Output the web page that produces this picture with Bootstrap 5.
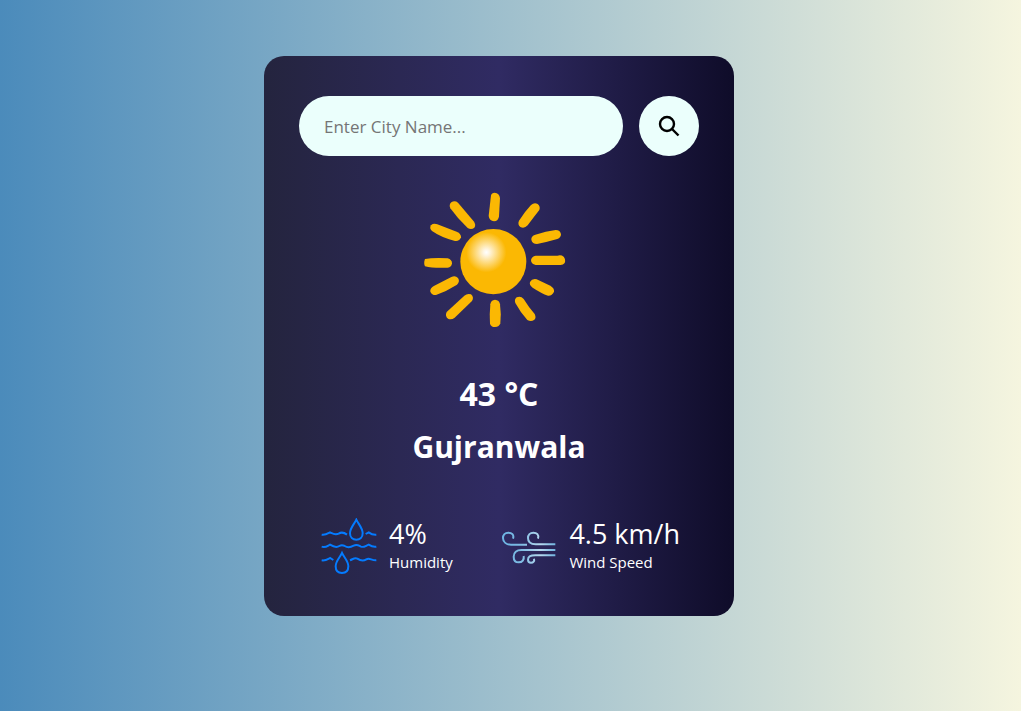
<!DOCTYPE html>
<html lang="en">
<head>
<meta charset="utf-8">
<meta name="viewport" content="width=device-width, initial-scale=1">
<title>Weather</title>
<link href="https://cdn.jsdelivr.net/npm/bootstrap@5.3.0/dist/css/bootstrap.min.css" rel="stylesheet">
<style>
  body {
    font-family: "Segoe UI", "Open Sans", sans-serif;
    background: linear-gradient(to right, #4b8bbb, #f5f5df);
  }
  .page { padding: 56px 23px 56px 0; }
  .weather {
    width: 90%;
    max-width: 470px;
    padding: 40px 35px 42px;
    border-radius: 20px;
    background: linear-gradient(to right, #24243e, #302b63, #0f0c29);
  }
  .city-input, .city-input:focus {
    height: 60px;
    padding: 0 25px;
    font-size: 17px;
    color: #555;
    background: #ebfffc;
  }
  .city-input::placeholder { color: #757575; }
  .search-btn { width: 60px; height: 60px; background: #ebfffc; }
  .sun { margin-top: 28px; }
  .temp, .city { line-height: 43px; font-weight: 700; }
  .temp { margin-top: 38px; font-size: 32px; }
  .city { margin-top: 10px; font-size: 30px; }
  .details { margin-top: 50px; padding: 0 19px 0 22px; }
  .value { font-size: 27px; line-height: 32px; }
  .label-text { font-size: 15px; line-height: 24px; }
</style>
</head>
<body class="min-vh-100">
<main class="page">
  <section class="weather mx-auto text-white text-center">
    <form class="d-flex gap-3">
      <input class="form-control city-input border-0 rounded-pill shadow-none" type="text" placeholder="Enter City Name..." aria-label="City name" spellcheck="false">
      <button class="btn search-btn rounded-circle flex-shrink-0 p-0 border-0 d-flex align-items-center justify-content-center" type="button" aria-label="Search">
        <svg width="22" height="22" viewBox="0 0 22 22" fill="none" stroke="#000" stroke-width="2.4"><circle cx="9" cy="9" r="7"/><path d="M14 14l6.500 6.500"/></svg>
      </button>
    </form>

    <svg class="sun" width="160" height="150" viewBox="15 0 480 450" role="img" aria-label="Clear sky">
      <defs>
        <radialGradient id="glow" gradientUnits="userSpaceOnUse" cx="217" cy="205" r="60">
          <stop offset="0" stop-color="#fff"/>
          <stop offset=".15" stop-color="#fff6e2"/>
          <stop offset="1" stop-color="#fbb803"/>
        </radialGradient>
      </defs>
      <ellipse cx="238" cy="233" rx="99" ry="98" fill="url(#glow)"/>
      <g fill="#fbb803">
        <path d="M231 34q2-8 11-8q14 1 16 17l-3 54q-2 15-15 15q-14-1-16-16z"/>
        <path d="M351 63q10-9 20-3q9 8 5 18q-15 19-35 46q-10 11-22 5q-9-8-4-19q18-28 36-47z"/>
        <path d="M364 152q32-10 61-14q14 0 16 13q0 10-11 14q-31 9-61 15q-14 0-17-13q-1-11 12-15z"/>
        <path d="M365 215h65q11-4 19 3q7 9 3 19q-5 7-15 6h-72q-14-3-14-15q2-11 14-13z"/>
        <path d="M368 286l41 19q13 8 11 18q-6 13-18 12q-20-7-46-24q-11-8-8-17q6-11 20-8z"/>
        <path d="M329 345q16 26 33 45q6 12-2 18q-9 6-20 0q-21-23-36-51q-4-10 4-17q12-6 21 5z"/>
        <path d="M229 361q2-13 14-14q13 1 15 14q4 27 1 57q-3 11-16 11q-12 0-15-10q-2-30 1-58z"/>
        <path d="M151 335q9-8 20-4q10 9 3 20l-52 50q-10 8-20 3q-10-8-4-20z"/>
        <path d="M61 305l51-26q12-6 20 3q7 10-3 20q-30 19-63 31q-12 1-17-10q-2-11 12-18z"/>
        <path d="M33 225q23-4 68-2q13 4 13 15q-1 12-13 13q-44 2-68-4q-5-9 0-22z"/>
        <path d="M70 121l58 22q14 6 13 17q-5 13-18 11q-42-11-69-30q-9-8-3-17q7-7 19-3z"/>
        <path d="M112 55q10-7 20 1l47 56q8 11 2 19q-9 8-20 1q-31-29-52-59q-5-11 3-18z"/>
      </g>
    </svg>

    <h1 class="temp mb-0">43 °C</h1>
    <h2 class="city mb-0">Gujranwala</h2>

    <div class="details d-flex justify-content-between text-start">
      <div class="d-flex align-items-center gap-2">
        <svg class="me-1" width="56" height="56" viewBox="32 22 168 168" fill="none" stroke="#047bff" stroke-width="6" aria-hidden="true">
          <path d="M138 27C132 40 119 52 119 68C119 80 127 87 138 87S157 80 157 68C157 52 144 40 138 27Z"/>
          <path d="M95 127C89 140 76 151 76 167C76 180 84 187 95 187S114 180 114 167C114 151 101 140 95 127Z"/>
          <path d="M34 72C45 74 50 70 59 65C69 70 74 74 85 69C94 63 102 66 110 72M166 70L175 65C182 70 187 73 198 72"/>
          <path d="M34 108C46 112 51 106 59 102C67 107 77 113 87 106C95 101 98 103 103 106C114 113 121 110 130 105C141 100 145 105 152 108C161 111 166 105 175 102C183 107 188 110 198 108"/>
          <path d="M34 149C45 151 50 147 59 142L69 148M119 149C129 145 133 140 141 144C151 151 158 153 168 146C178 140 183 150 198 149"/>
        </svg>
        <div>
          <div class="value">4%</div>
          <div class="label-text">Humidity</div>
        </div>
      </div>
      <div class="d-flex align-items-center gap-2">
        <svg class="me-1" width="56" height="56" viewBox="18 22 168 168" fill="none" stroke="url(#breeze)" stroke-width="6" aria-hidden="true">
          <defs>
            <linearGradient id="breeze" gradientUnits="userSpaceOnUse" x1="22" y1="0" x2="182" y2="0">
              <stop offset="0" stop-color="#6db5e4"/>
              <stop offset=".35" stop-color="#7fbce3"/>
              <stop offset=".72" stop-color="#b5d8ef"/>
              <stop offset="1" stop-color="#70b3df"/>
            </linearGradient>
          </defs>
          <path d="M54 84C58 72 50 66 40 66C30 66 24 73 24 82C24 94 34 102 48 102H96"/>
          <path d="M129 84C133 72 125 66 115 66C105 66 99 73 99 82C99 94 108 101 122 101H181"/>
          <path d="M181 118H79C65 118 56 126 56 138C56 149 62 155 71 155C82 155 88 147 86 136"/>
          <path d="M181 134H121C108 134 99 138 99 147C99 153 103 156 108 156C115 156 119 151 117 144"/>
        </svg>
        <div>
          <div class="value">4.5 km/h</div>
          <div class="label-text">Wind Speed</div>
        </div>
      </div>
    </div>
  </section>
</main>
<script src="https://cdn.jsdelivr.net/npm/bootstrap@5.3.0/dist/js/bootstrap.bundle.min.js"></script>
</body>
</html>
